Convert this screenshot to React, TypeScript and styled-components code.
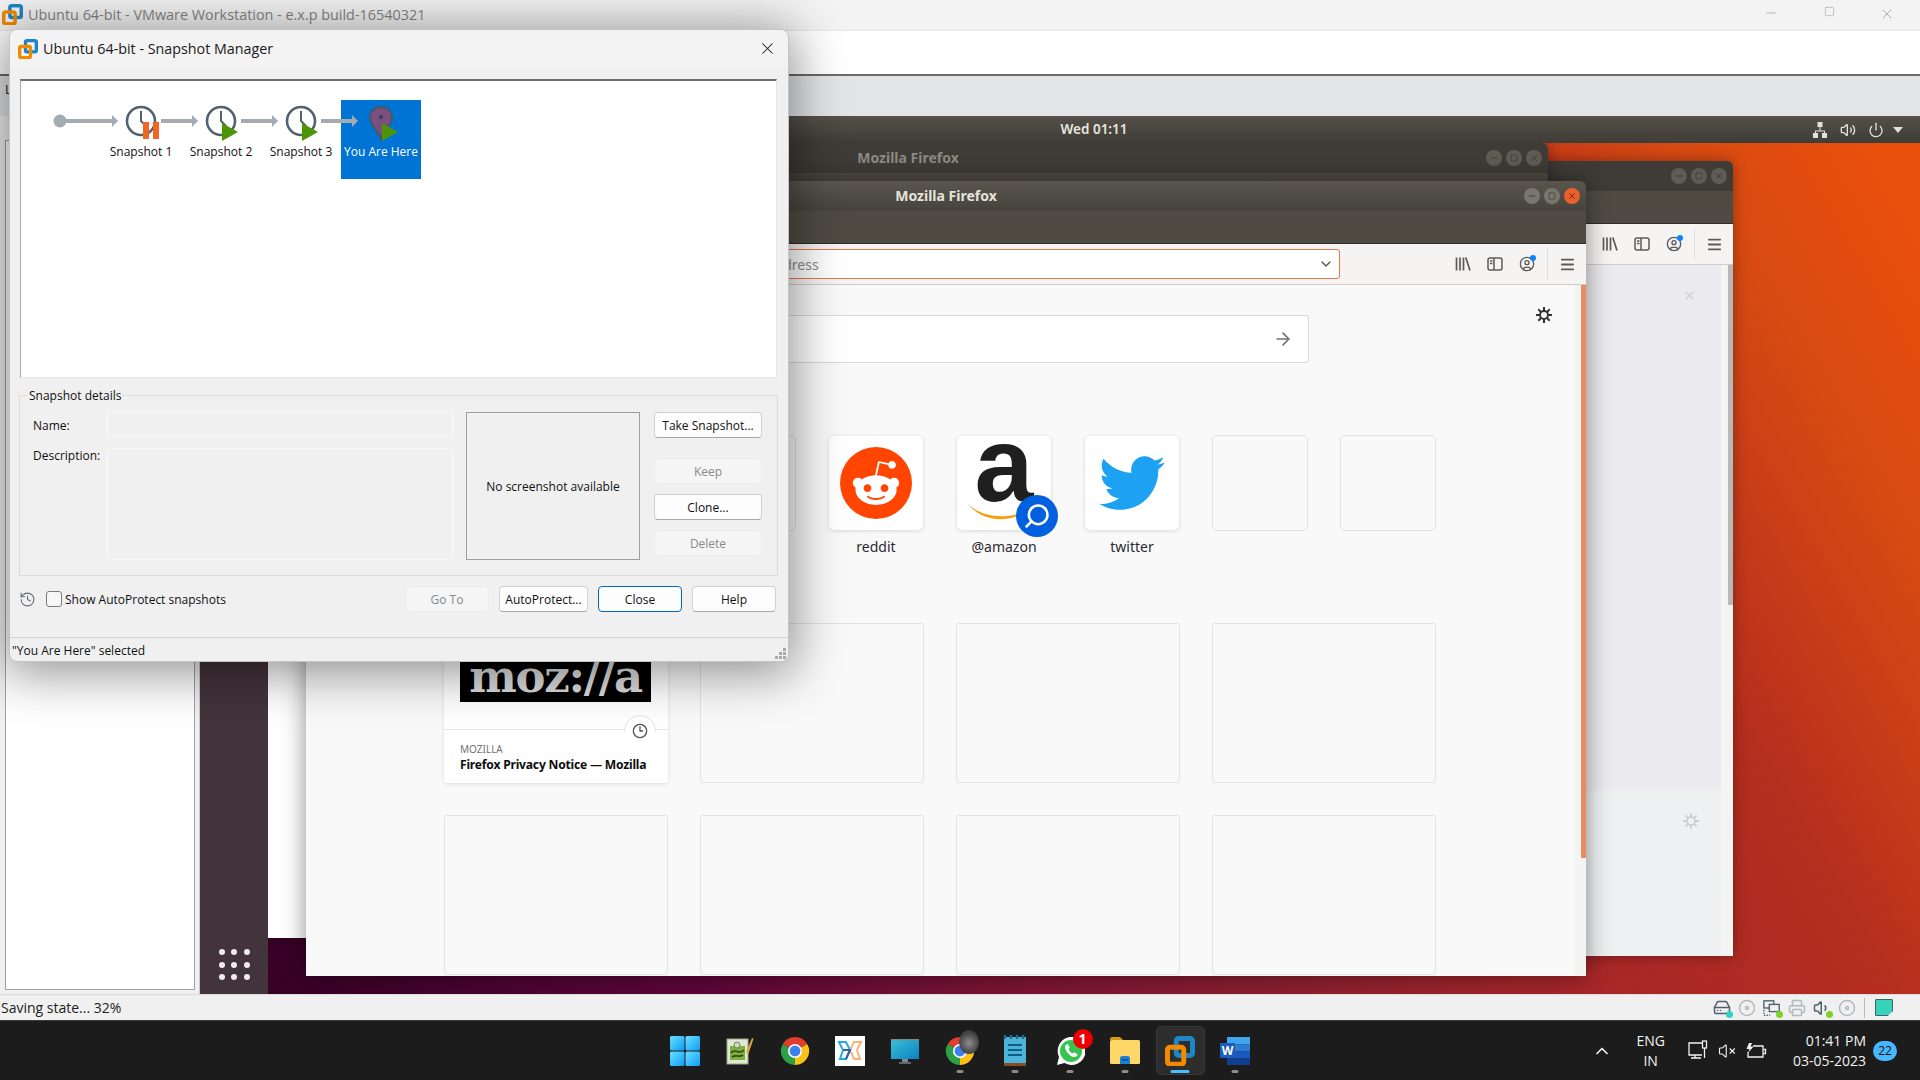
import React from "react";
import styled, { createGlobalStyle } from "styled-components";
import { ChevronDown, ChevronUp, CircleUser, Disc, HardDrive, Menu, Printer, Volume1, VolumeX, X, Power, Volume2, ArrowRight, Clock3, History, Minus, Square, Search } from "lucide-react";
import { FaRedditAlien, FaTwitter } from "react-icons/fa";

const GlobalStyle = createGlobalStyle`
	html, body {
		margin: 0;
		padding: 0;
		background: #f0f0f0;
	}
	* {
		box-sizing: border-box;
	}
`;

const uiFont = `"Open Sans", "Noto Sans", sans-serif`;
const ubuntuFont = `"Noto Sans", "Open Sans", sans-serif`;

const Screen = styled.div`
	position: relative;
	width: 1920px;
	height: 1080px;
	overflow: hidden;
	display: flex;
	flex-direction: column;
	font-family: ${uiFont};
	background: #f0f0f0;
`;

const AppTitleBar = styled.header`
	height: 30px;
	flex: none;
	display: flex;
	align-items: center;
	background: #f3f3f3;
	color: #858585;
	font-size: 14.4px;
	padding: 0 0 2px 2px;
	gap: 5px;
`;

const TitleControls = styled.div`
	margin-left: auto;
	display: flex;
	color: #888;
	& > span {
		width: 58px;
		display: flex;
		justify-content: center;
	}
	padding-right: 4px;
`;

const AppToolbar = styled.div`
	height: 44px;
	flex: none;
	background: #fff;
	border-top: 1px solid #e6e6e6;
`;

const TabStrip = styled.div`
	height: 42px;
	flex: none;
	background: #e3e4e6;
	border-top: 2px solid #6a6a6a;
	font-size: 13px;
	padding: 4px 0 0 5px;
	color: #222;
`;

const Body = styled.div`
	flex: 1;
	min-height: 0;
	display: flex;
`;

const LibraryColumn = styled.aside`
	width: 200px;
	flex: none;
	padding: 24px 4px 4px 5px;
	background: #f0f0f0;
	border-right: 1px solid #c8c8c8;
	display: flex;
`;

const LibraryTree = styled.div`
	flex: 1;
	background: #fff;
	border: 1px solid #a0a0a0;
`;

const Desktop = styled.main`
	flex: 1;
	min-width: 0;
	display: flex;
	flex-direction: column;
`;

const TopPanel = styled.div`
	height: 27px;
	flex: none;
	background: linear-gradient(#55514a, #3f3c36);
	color: #e9e6df;
	font: 600 13.5px ${ubuntuFont};
	display: flex;
	align-items: center;
	position: relative;
	justify-content: center;
	padding: 0 0 2px 68px;
`;

const PanelIcons = styled.div`
	position: absolute;
	right: 17px;
	top: 5px;
	display: flex;
	align-items: center;
	gap: 12px;
	color: #e4e1da;
`;

const Caret = styled.span`
	width: 0;
	height: 0;
	border-left: 5px solid transparent;
	border-right: 5px solid transparent;
	border-top: 6px solid #e4e1da;
	margin-left: -3px;
`;

const Wallpaper = styled.div`
	flex: 1;
	min-height: 0;
	position: relative;
	display: flex;
	background: linear-gradient(
		60deg,
		#2e0120 0%,
		#3a0228 5%,
		#5e0638 23%,
		#7a1434 36%,
		#8e2030 50%,
		#a5262a 61%,
		#b42d1f 76%,
		#d74a12 89%,
		#ea4f0c 98%
	);
	overflow: hidden;
`;

const Dock = styled.nav`
	width: 68px;
	flex: none;
	background: #43333a;
	display: grid;
	grid-template-columns: repeat(3, 6px);
	grid-auto-rows: 6px;
	justify-content: center;
	align-content: end;
	gap: 6.5px;
	padding-bottom: 14px;
	position: relative;
	z-index: 1;
	& > i {
		background: #efecec;
		border-radius: 50%;
	}
`;

const BrowserWindow = styled.section<{ $x: number; $y: number; $front?: boolean }>`
	position: absolute;
	left: ${(p) => p.$x}px;
	top: ${(p) => p.$y}px;
	width: 1280px;
	height: 795px;
	display: flex;
	flex-direction: column;
	border-radius: 6px 6px 0 0;
	overflow: hidden;
	box-shadow: ${(p) => (p.$front ? "0 0 24px rgba(0,0,0,.45)" : "0 0 14px rgba(0,0,0,.35)")};
`;

const WindowTitle = styled.div<{ $active?: boolean }>`
	height: 30px;
	flex: none;
	position: relative;
	display: flex;
	align-items: center;
	justify-content: center;
	padding-bottom: 2px;
	background: ${(p) => (p.$active ? "linear-gradient(#5a564e, #46433c)" : "#3f3c37")};
	color: ${(p) => (p.$active ? "#e6e2da" : "#8d8a83")};
	font: 700 14px ${ubuntuFont};
`;

const WindowButtons = styled.div`
	position: absolute;
	right: 6px;
	top: 7px;
	display: flex;
	gap: 4px;
`;

const WindowButton = styled.span<{ $close?: boolean; $dim?: boolean }>`
	width: 16px;
	height: 16px;
	border-radius: 50%;
	display: flex;
	align-items: center;
	justify-content: center;
	background: ${(p) => (p.$close ? "#e9602c" : p.$dim ? "#5f5c55" : "#7a766e")};
	color: ${(p) => (p.$close ? "#6e2a10" : "#3a3833")};
`;

const WindowHeader = styled.div`
	height: 33px;
	flex: none;
	background: #4f4b43;
	border-bottom: 1px solid #2f2d29;
`;

const NavBar = styled.div`
	height: 41px;
	flex: none;
	background: #f5f4f3;
	border-bottom: 1px solid #cfcdca;
	display: flex;
	align-items: center;
	color: #5b5b5b;
	padding-right: 10px;
`;

const UrlBar = styled.div`
	width: 1034px;
	height: 30px;
	flex: none;
	background: #fff;
	border: 1px solid #e9774b;
	border-radius: 3px;
	display: flex;
	align-items: center;
	justify-content: flex-end;
	padding: 0 5px;
	color: #555;
	font-size: 14px;
	font-family: ${ubuntuFont};
`;

const UrlHint = styled.span`
	margin-right: auto;
	margin-left: 350px;
	color: #8b8b8b;
`;

const NavTools = styled.div`
	margin-left: auto;
	display: flex;
	align-items: center;
	gap: 16px;
	& > svg {
		flex: none;
	}
`;

const NavDivider = styled.span`
	width: 1px;
	height: 32px;
	background: #dfdddb;
	margin: 0 -5px 0 -4px;
`;

const AccountBadge = styled.span`
	position: relative;
	display: flex;
	&::after {
		content: "";
		position: absolute;
		right: -1px;
		top: -1px;
		width: 6px;
		height: 6px;
		border-radius: 50%;
		background: #0a84ff;
	}
`;

const PageContent = styled.div<{ $tone: "blank" | "rear" | "newtab" }>`
	flex: 1;
	min-height: 0;
	position: relative;
	overflow: hidden;
	background: ${(p) =>
		p.$tone === "blank" ? "#fff" : p.$tone === "rear" ? "linear-gradient(#ebebef 526px, #eff0f1 526px)" : "#f9f9f9"};
`;

const ScrollTrack = styled.div`
	position: absolute;
	right: 0;
	top: 0;
	bottom: 0;
	width: 12px;
	background: #f4f4f2;
`;

const ScrollThumb = styled.span<{ $orange?: boolean }>`
	position: absolute;
	right: 0;
	top: 0;
	width: 5px;
	height: ${(p) => (p.$orange ? 573 : 340)}px;
	background: ${(p) => (p.$orange ? "#ee8a62" : "#b8b8b8")};
`;

const FadedMark = styled.span<{ $top: number }>`
	position: absolute;
	left: 1230px;
	top: ${(p) => p.$top}px;
	color: #cfcfd2;
	display: flex;
`;

const GearButton = styled.span`
	position: absolute;
	right: 34px;
	top: 22px;
	color: #333;
	display: flex;
`;

const NewTabColumn = styled.div`
	width: 992px;
	margin-left: 138px;
	padding-top: 30px;
	display: flex;
	flex-direction: column;
	align-items: flex-start;
	font-family: ${ubuntuFont};
`;

const SearchBox = styled.div`
	width: 738px;
	height: 48px;
	margin-left: 127px;
	background: #fff;
	border: 1px solid #d9d9dc;
	border-radius: 3px;
	display: flex;
	align-items: center;
	justify-content: flex-end;
	padding-right: 15px;
	color: #737373;
	flex: none;
`;

const TileRow = styled.div`
	display: flex;
	gap: 32px;
	margin-top: 72px;
`;

const Tile = styled.div`
	width: 96px;
	display: flex;
	flex-direction: column;
	align-items: center;
	gap: 6px;
	font-size: 14px;
	color: #2b2a33;
`;

const TileFace = styled.div<{ $empty?: boolean }>`
	width: ${(p) => (p.$empty ? 96 : 94)}px;
	height: ${(p) => (p.$empty ? 96 : 94)}px;
	margin: ${(p) => (p.$empty ? 0 : 1)}px;
	position: relative;
	border-radius: 5px;
	display: flex;
	align-items: center;
	justify-content: center;
	background: ${(p) => (p.$empty ? "#f9f9fa" : "#fff")};
	border: ${(p) => (p.$empty ? "1px solid #e3e3e5" : "none")};
	box-shadow: ${(p) => (p.$empty ? "none" : "0 1px 4px rgba(0,0,0,.14)")};
`;

const RedditDisc = styled.span`
	width: 72px;
	height: 72px;
	border-radius: 50%;
	background: #ff4500;
	color: #fff;
	display: flex;
	align-items: center;
	justify-content: center;
`;

const AmazonMark = styled.span`
	font: 700 106px/1 "Liberation Sans", sans-serif;
	color: #1f1f1f;
	margin-top: -38px;
`;

const AmazonSmile = styled.svg`
	position: absolute;
	left: 10px;
	top: 66px;
`;

const SearchBadge = styled.span`
	position: absolute;
	right: -7px;
	bottom: -7px;
	width: 42px;
	height: 42px;
	border-radius: 50%;
	background: #0060df;
	color: #fff;
	display: flex;
	align-items: center;
	justify-content: center;
	transform: scaleX(-1);
`;

const CardGrid = styled.div`
	display: grid;
	grid-template-columns: repeat(4, 224px);
	grid-auto-rows: 160px;
	gap: 32px;
	margin-top: 67px;
`;

const Card = styled.article<{ $empty?: boolean }>`
	border-radius: 3px;
	background: ${(p) => (p.$empty ? "#f9f9fa" : "#fff")};
	border: ${(p) => (p.$empty ? "1px solid #e3e3e5" : "none")};
	box-shadow: ${(p) => (p.$empty ? "none" : "0 1px 4px rgba(0,0,0,.12)")};
	position: relative;
	display: flex;
	flex-direction: column;
`;

const CardImage = styled.div`
	height: 107px;
	flex: none;
	padding: 0 17px 27px 16px;
	display: flex;
	border-bottom: 1px solid #e3e3e5;
`;

const MozLogo = styled.div`
	flex: 1;
	background: #000;
	color: #dcdcdc;
	font: 700 45px/1 "DejaVu Serif", serif;
	display: flex;
	align-items: flex-end;
	justify-content: center;
	padding-bottom: 3px;
	letter-spacing: -1.3px;
`;

const CardClock = styled.span`
	position: absolute;
	left: 180px;
	top: 92px;
	width: 32px;
	height: 32px;
	border-radius: 50%;
	background: #fff;
	border: 1px solid #e3e3e5;
	clip-path: inset(0 0 15px 0);
`;

const CardClockGlyph = styled.span`
	position: absolute;
	left: 188px;
	top: 100px;
	color: #55534f;
	display: flex;
`;

const CardMeta = styled.div`
	padding: 12px 16px 0;
	font-size: 10px;
	line-height: 14px;
	color: #737373;
`;

const CardTitle = styled.div`
	margin-top: 1px;
	font-size: 12.1px;
	line-height: 16px;
	font-weight: 700;
	color: #0c0c0d;
	white-space: nowrap;
	letter-spacing: -0.2px;
`;

const StatusBar = styled.footer`
	height: 26px;
	flex: none;
	background: #f0f0f0;
	border-top: 1px solid #dcdcdc;
	display: flex;
	align-items: center;
	font-size: 14px;
	padding-left: 1px;
	color: #222;
`;

const StatusIcons = styled.div`
	margin-left: auto;
	display: flex;
	align-items: center;
	gap: 7px;
	padding-right: 27px;
	color: #a9afb3;
`;

const DeviceIcon = styled.span<{ $active?: boolean }>`
	position: relative;
	width: 18px;
	display: flex;
	justify-content: center;
	color: ${(p) => (p.$active ? "#4f5f6b" : "#b4b9bd")};
`;

const DeviceDot = styled.i<{ $color: string }>`
	position: absolute;
	right: -2px;
	bottom: -1px;
	width: 7px;
	height: 7px;
	border-radius: 50%;
	background: ${(p) => p.$color};
`;

const StatusDivider = styled.span`
	width: 1px;
	height: 20px;
	background: #b8b8b8;
	margin: 0 3px 0 1px;
`;

const NoteIcon = styled.span`
	width: 18px;
	height: 17px;
	background: #35d4b8;
	border: 1px solid #47606a;
	border-radius: 1px;
	clip-path: polygon(0 0, 100% 0, 100% 70%, 70% 100%, 0 100%);
`;

const Taskbar = styled.footer`
	height: 60px;
	flex: none;
	background: #1c1c1c;
	border-top: 1px solid #3a3a3a;
	display: flex;
	align-items: center;
	color: #fff;
	font-size: 14px;
`;

const TaskSpacer = styled.div`
	flex: 1 1 0;
`;

const TaskApps = styled.div`
	display: flex;
	gap: 6px;
`;

const TaskApp = styled.div<{ $active?: boolean }>`
	width: 49px;
	height: 49px;
	position: relative;
	display: flex;
	align-items: center;
	justify-content: center;
	border-radius: 5px;
	background: ${(p) => (p.$active ? "#2d2d2d" : "transparent")};
	border: 1px solid ${(p) => (p.$active ? "#383838" : "transparent")};
`;

const RunningDot = styled.span<{ $active?: boolean }>`
	position: absolute;
	bottom: 1px;
	left: 50%;
	transform: translateX(-50%);
	height: 3px;
	width: ${(p) => (p.$active ? 19 : 7)}px;
	border-radius: 2px;
	background: ${(p) => (p.$active ? "#47c0ff" : "#8b8b8b")};
`;

const UnreadBadge = styled.span`
	position: absolute;
	right: 1px;
	top: 2px;
	width: 20px;
	height: 20px;
	border-radius: 50%;
	background: #ee0000;
	color: #fff;
	font: 700 14px/20px "Open Sans", sans-serif;
	text-align: center;
`;

const ProfileBlob = styled.span`
	position: absolute;
	right: 5px;
	top: 3px;
	width: 20px;
	height: 24px;
	border-radius: 50%;
	background: radial-gradient(circle at 50% 55%, #8f8f8f, #4a4a4a 55%, #2b2b2b);
`;

const Tray = styled.div`
	flex: 1 1 0;
	display: flex;
	align-items: center;
	justify-content: flex-end;
`;

const TwoLines = styled.div<{ $right?: boolean }>`
	display: flex;
	flex-direction: column;
	align-items: ${(p) => (p.$right ? "flex-end" : "center")};
	line-height: 20px;
	color: #f2f2f2;
`;

const LangBlock = styled(TwoLines)`
	margin-left: 24px;
`;

const TrayIcons = styled.div`
	display: flex;
	align-items: center;
	gap: 9px;
	margin: 0 26px 0 22px;
	color: #f2f2f2;
`;

const NotifyBadge = styled.span`
	width: 24px;
	height: 20px;
	border-radius: 10px;
	margin: 0 23px 0 7px;
	background: #47b8ff;
	color: #111;
	font-size: 12px;
	line-height: 20px;
	text-align: center;
`;

const Dialog = styled.section`
	position: absolute;
	z-index: 10;
	left: 9px;
	top: 29px;
	width: 780px;
	height: 633px;
	display: flex;
	flex-direction: column;
	background: #f0f0f0;
	border: 1px solid #c4c4c4;
	border-radius: 8px;
	box-shadow: 0 6px 50px 6px rgba(0, 0, 0, 0.42);
	font-size: 12px;
	color: #111;
	overflow: hidden;
`;

const DialogTitle = styled.div`
	height: 37px;
	flex: none;
	background: #f3f3f3;
	display: flex;
	align-items: center;
	gap: 5px;
	padding: 0 11px 0 8px;
	font-size: 14.3px;
	color: #1a1a1a;
	& > svg:last-child {
		margin-left: auto;
	}
`;

const SnapshotTree = styled.div`
	height: 299px;
	margin: 12px 11px 0 10px;
	flex: none;
	background: #fff;
	border-top: 2px solid #6e6e6e;
	border-left: 1px solid #a8a8a8;
	border-right: 1px solid #e6e6e6;
	border-bottom: 1px solid #e6e6e6;
	padding: 19px 0 0 80px;
	display: flex;
	align-items: flex-start;
`;

const SnapshotNode = styled.div<{ $selected?: boolean }>`
	width: 80px;
	height: 79px;
	display: flex;
	flex-direction: column;
	align-items: center;
	background: ${(p) => (p.$selected ? "#0074d4" : "transparent")};
	color: ${(p) => (p.$selected ? "#fff" : "#111")};
	white-space: nowrap;
	line-height: 16px;
	gap: 2px;
	& > svg {
		overflow: visible;
		flex: none;
	}
`;

const DetailsGroup = styled.fieldset`
	position: relative;
	margin: 17px 10px 0 9px;
	padding: 16px 14px 15px 13px;
	border: 1px solid #dcdcdc;
	height: 181px;
	flex: none;
	display: grid;
	grid-template-columns: 74px 346px 187px 122px;
	grid-template-rows: 25px 112px;
	row-gap: 11px;
	column-gap: 0;
`;

const GroupLegend = styled.span`
	position: absolute;
	left: 8px;
	top: -8px;
	padding: 0 1px;
	background: #f0f0f0;
	line-height: 16px;
`;

const FieldLabel = styled.label<{ $top: number }>`
	line-height: 16px;
	margin-top: ${(p) => p.$top}px;
`;

const FieldBox = styled.div`
	border: 1px solid #f8f8f8;
	background: #f0f0f0;
`;

const PreviewBox = styled.div`
	grid-column: 3;
	grid-row: 1 / 3;
	margin-left: 13px;
	border: 1px solid #9e9e9e;
	display: flex;
	align-items: center;
	justify-content: center;
`;

const ActionColumn = styled.div`
	grid-column: 4;
	grid-row: 1 / 3;
	margin-left: 14px;
	display: flex;
	flex-direction: column;
	align-items: stretch;
`;

const DialogButton = styled.button<{ $primary?: boolean; $gap?: number }>`
	height: 26px;
	flex: none;
	padding: 0;
	margin-top: ${(p) => p.$gap ?? 0}px;
	border-radius: 4px;
	font: 12px ${uiFont};
	color: #111;
	background: #fdfdfd;
	border: 1px solid ${(p) => (p.$primary ? "#0067c0" : "#d0d0d0")};
	border-bottom-color: ${(p) => (p.$primary ? "#0067c0" : "#a8a8a8")};
	&:disabled {
		background: #f5f5f5;
		border-color: #ececec;
		color: #8a8a8a;
	}
`;

const BottomRow = styled.div`
	height: 26px;
	margin: 10px 12px 0 9px;
	flex: none;
	display: flex;
	align-items: center;
	color: #111;
`;

const Checkbox = styled.span`
	width: 16px;
	height: 16px;
	margin: 0 3px 0 10px;
	background: #f7f7f7;
	border: 1px solid #7a7a7a;
	border-radius: 3px;
`;

const BottomButtons = styled.div`
	margin-left: auto;
	display: grid;
	grid-template-columns: 84px 89px 84px 84px;
	gap: 10px;
`;

const DialogStatus = styled.div`
	margin-top: auto;
	height: 24px;
	flex: none;
	position: relative;
	border-top: 1px solid #d4d4d4;
	padding-left: 2px;
	line-height: 26px;
`;

const ResizeGrip = styled.svg`
	position: absolute;
	right: 1px;
	bottom: 1px;
`;

// logos and glyphs that no icon package has

const VmwareLogo = ({ size }: { size: number }) => (
	<svg width={size} height={size} viewBox="0 0 24 24" fill="none">
		<rect x="9" y="2" width="13" height="13.500" rx="2" stroke="#1b87c9" strokeWidth="4" />
		<rect x="2" y="9" width="13" height="13.500" rx="2" stroke="#f18a00" strokeWidth="4" />
	</svg>
);

const ClockFace = () => (
	<g fill="none" stroke="#506270" strokeWidth="2.6">
		<circle cx="40" cy="21" r="14" />
		<path d="M40 11v10l5 5" strokeWidth="2" />
	</g>
);

const NodeArrow = ({ from }: { from: number }) => (
	<g>
		{from < -30 && <circle cx={from} cy="21" r="6.5" fill="#a4abb1" />}
		<path d={`M${from} 21H13`} stroke="#a4abb1" strokeWidth="4" />
		<path d="M11 15l6 6-6 6z" fill="#a4abb1" />
	</g>
);

const PlayMark = () => <path d="M41 23l16 9-16 9z" fill="#4c9408" />;

const NodeGlyph = ({ index }: { index: number }) => {
	if (index === 3) {
		return (
			<svg width="80" height="42" viewBox="0 0 80 42">
				<NodeArrow from={-20} />
				<path d="M40 7c-6.500 0-11 4.600-11 10.500 0 7 8 14 11 21 3-7 11-14 11-21C51 11.600 46.500 7 40 7z" fill="#7b4f7f" stroke="#465868" strokeWidth="2" />
				<circle cx="40" cy="17" r="2" fill="#35404a" />
				<PlayMark />
			</svg>
		);
	}
	return (
		<svg width="80" height="42" viewBox="0 0 80 42">
			<NodeArrow from={index === 0 ? -41 : -20} />
			<ClockFace />
			{index === 0 ? (
				<g fill="#f26522">
					<rect x="42" y="22" width="6" height="17" />
					<rect x="52" y="22" width="6" height="17" />
				</g>
			) : (
				<PlayMark />
			)}
		</svg>
	);
};

const LibraryIcon = () => (
	<svg width="16" height="16" viewBox="0 0 16 16" stroke="currentColor" strokeWidth="1.700">
		<path d="M1.500 1.500v13M5 1.500v13M8.500 1.500v13M10.800 1.500L15 14.500" />
	</svg>
);

const SidebarIcon = () => (
	<svg width="16" height="16" viewBox="0 0 16 16" fill="none" stroke="currentColor" strokeWidth="1.500">
		<rect x="1" y="2" width="14" height="12" rx="2" />
		<path d="M7 2v12M3 5h2.500M3 7.500h2.500" />
	</svg>
);

const SunGear = ({ size, strokeWidth }: { size: number; strokeWidth: number }) => (
	<svg width={size} height={size} viewBox="0 0 16 16" fill="none" stroke="currentColor" strokeWidth={strokeWidth}>
		<circle cx="8" cy="8" r="4" />
		<path d="M8 0v4M8 12v4M0 8h4M12 8h4M2.300 2.300l2.800 2.800M10.900 10.900l2.800 2.800M2.300 13.700l2.800-2.800M10.900 5.100l2.800-2.800" />
	</svg>
);

const PanelNetworkIcon = () => (
	<svg width="16" height="18" viewBox="0 0 16 18" fill="currentColor">
		<rect x="5.500" y="1" width="5" height="5" />
		<rect x="1" y="12" width="5" height="5" />
		<rect x="10" y="12" width="5" height="5" />
		<path d="M7.500 6h1v3.500H13V12h-1V10.500H4V12H3V9.500h4.500z" />
	</svg>
);

const SharedFoldersIcon = () => (
	<svg width="20" height="18" viewBox="0 0 20 18" fill="none" stroke="currentColor" strokeWidth="1.500">
		<rect x="1" y="1" width="11" height="8" fill="#f0f0f0" />
		<rect x="7" y="5" width="11" height="8" fill="#f0f0f0" />
		<path d="M1 11v6h7" strokeDasharray="1.500 1.500" />
	</svg>
);

const ChromeIcon = () => (
	<svg width="30" height="30" viewBox="0 0 32 32">
		<path d="M16 16L3 8.500A15 15 0 0 1 29 8.500z" fill="#e33b2e" />
		<path d="M16 16L29 8.500A15 15 0 0 1 16 31z" fill="#fbc116" />
		<path d="M16 16L16 31A15 15 0 0 1 3 8.500z" fill="#2d9f47" />
		<circle cx="16" cy="16" r="7.500" fill="#fff" />
		<circle cx="16" cy="16" r="5.800" fill="#3c7fee" />
	</svg>
);

const WindowsIcon = () => (
	<svg width="30" height="30" viewBox="0 0 30 30">
		<defs>
			<linearGradient id="win" x1="0" y1="0" x2="1" y2="1">
				<stop offset="0" stopColor="#6be1ff" />
				<stop offset="1" stopColor="#0f9cf5" />
			</linearGradient>
		</defs>
		<rect x="0" y="0" width="14.500" height="14.500" rx="1.500" fill="url(#win)" />
		<rect x="15.500" y="0" width="14.500" height="14.500" rx="1.500" fill="url(#win)" />
		<rect x="0" y="15.500" width="14.500" height="14.500" rx="1.500" fill="url(#win)" />
		<rect x="15.500" y="15.500" width="14.500" height="14.500" rx="1.500" fill="url(#win)" />
	</svg>
);

const NotepadPlusIcon = () => (
	<svg width="30" height="30" viewBox="0 0 30 30">
		<rect x="2" y="3" width="21" height="25" fill="#dfe8d2" stroke="#9aa58c" />
		<rect x="5" y="10" width="15" height="14" fill="#7fb13a" />
		<path d="M6 17c4-6 8 3 13-3M7 21c4-3 7 1 11-2" stroke="#2d4a14" strokeWidth="1.600" fill="none" />
		<circle cx="12" cy="9" r="3" fill="#cfd8c2" stroke="#76806a" />
		<path d="M21 16l6-14 1.500.8-5 15z" fill="#d9a23a" />
	</svg>
);

const ZohoIcon = () => (
	<svg width="30" height="30" viewBox="0 0 30 30" fill="none" strokeWidth="2">
		<rect width="30" height="30" fill="#fff" />
		<path d="M4 6h7l4 8-4 9H5l3-9z" stroke="#27a9e1" />
		<path d="M26 6h-7l-4 8 4 9h6l-3-9z" stroke="#f9b27a" />
		<path d="M8 14h7l-4 9" stroke="#2d5fb3" />
	</svg>
);

const MonitorIcon = () => (
	<svg width="30" height="30" viewBox="0 0 30 30">
		<defs>
			<linearGradient id="mon" x1="0" y1="0" x2="1" y2="1">
				<stop offset="0" stopColor="#37c4d8" />
				<stop offset="1" stopColor="#0f7ec2" />
			</linearGradient>
		</defs>
		<rect x="1" y="3" width="28" height="20" fill="url(#mon)" />
		<rect x="1" y="3" width="28" height="1.500" fill="#7a8a92" />
		<rect x="12" y="23" width="6" height="3" fill="#7c8890" />
		<rect x="9" y="26" width="12" height="2" fill="#5d666c" />
	</svg>
);

const NotepadIcon = () => (
	<svg width="24" height="32" viewBox="0 0 24 32">
		<rect x="1" y="2" width="22" height="27" fill="#4cb3d9" />
		<rect x="1" y="28" width="22" height="3" fill="#8a4b1f" />
		<path d="M2 0v4M8 0v4M14 0v4M20 0v4" stroke="#1c6f96" strokeWidth="2.400" />
		<path d="M5 10h14M5 15h14M5 20h14" stroke="#125d87" strokeWidth="2" />
	</svg>
);

const WhatsappIcon = () => (
	<svg width="30" height="30" viewBox="0 0 30 30">
		<path d="M2 29l2-8A14 14 0 1 1 9.500 27z" fill="#fff" />
		<circle cx="16" cy="15" r="11" fill="#35c54f" />
		<path d="M11.500 8.500c-2 1.500-2 4 .5 7.500s5.500 5.500 8 5c1.500-.4 2.500-1.500 2.500-2.800l-3.500-2-1.500 1.300c-1.500-.5-3.500-2.800-4-4.500l1.300-1.400-2-3.600z" fill="#fff" />
	</svg>
);

const FolderIcon = () => (
	<svg width="30" height="30" viewBox="0 0 30 30">
		<path d="M0 3c0-1 1-2 2-2h8l3 3H0z" fill="#d59b12" />
		<rect x="0" y="4" width="30" height="24" rx="1.500" fill="#ffd769" />
		<path d="M10 28v-6c0-1 1-2 2-2h6c1 0 2 1 2 2v6z" fill="#1d7fd1" />
		<rect x="12" y="23" width="6" height="1.500" fill="#0c4f8c" />
	</svg>
);

const WordIcon = () => (
	<svg width="30" height="30" viewBox="0 0 30 30">
		<rect x="7" y="1" width="23" height="7.500" fill="#41a5ee" />
		<rect x="7" y="8.500" width="23" height="7" fill="#2b7cd3" />
		<rect x="7" y="15.500" width="23" height="7" fill="#185abd" />
		<rect x="7" y="22.500" width="23" height="6.500" fill="#103f91" />
		<rect x="0" y="7" width="15" height="15" rx="1" fill="#1a5cbf" />
		<text x="7.500" y="18.500" fontSize="12" fontWeight="700" fill="#fff" textAnchor="middle" fontFamily="Open Sans">W</text>
	</svg>
);

const MonitorPlugIcon = () => (
	<svg width="22" height="22" viewBox="0 0 22 22" fill="none" stroke="currentColor" strokeWidth="1.300">
		<path d="M15 3H2v12h13M8 15v3M4 18h10" />
		<rect x="15.500" y="1" width="4" height="7" />
		<path d="M17.500 8v10" />
	</svg>
);

const BatteryBoltIcon = () => (
	<svg width="22" height="20" viewBox="0 0 22 20" fill="none" stroke="currentColor" strokeWidth="1.300">
		<path d="M8 5h10v11H3V11" />
		<path d="M18.500 8.500h2v4h-2" />
		<path d="M4 2L1.500 8h3L3 12l5.500-6.500h-3L7 2z" fill="currentColor" stroke="none" />
	</svg>
);

const browserTools = (
	<NavTools>
		<LibraryIcon />
		<SidebarIcon />
		<AccountBadge>
			<CircleUser size={16} />
		</AccountBadge>
		<NavDivider />
		<Menu size={17} strokeWidth={2.500} />
	</NavTools>
);

const WindowControls = ({ active }: { active?: boolean }) => (
	<WindowButtons>
		<WindowButton $dim={!active}>
			<Minus size={10} strokeWidth={2} />
		</WindowButton>
		<WindowButton $dim={!active}>
			<Square size={8} strokeWidth={2} />
		</WindowButton>
		<WindowButton $close={active} $dim={!active}>
			<X size={10} strokeWidth={2} />
		</WindowButton>
	</WindowButtons>
);

const snapshots = ["Snapshot 1", "Snapshot 2", "Snapshot 3", "You Are Here"];
const taskApps: { key: string; icon: React.ReactNode; running?: boolean; active?: boolean; unread?: boolean; blob?: boolean }[] = [
	{ key: "start", icon: <WindowsIcon /> },
	{ key: "notepadpp", icon: <NotepadPlusIcon /> },
	{ key: "chrome", icon: <ChromeIcon /> },
	{ key: "zoho", icon: <ZohoIcon /> },
	{ key: "desktop", icon: <MonitorIcon /> },
	{ key: "chrome2", icon: <ChromeIcon />, running: true, blob: true },
	{ key: "notepad", icon: <NotepadIcon />, running: true },
	{ key: "whatsapp", icon: <WhatsappIcon />, running: true, unread: true },
	{ key: "explorer", icon: <FolderIcon />, running: true },
	{ key: "vmware", icon: <VmwareLogo size={30} />, active: true },
	{ key: "word", icon: <WordIcon />, running: true },
];

export default function App() {
	return (
		<Screen>
			<GlobalStyle />
			<AppTitleBar>
				<VmwareLogo size={21} />
				Ubuntu 64-bit - VMware Workstation - e.x.p build-16540321
				<TitleControls>
					<span><Minus size={14} strokeWidth={1} /></span>
					<span><Square size={11} strokeWidth={1} /></span>
					<span><X size={16} strokeWidth={1} /></span>
				</TitleControls>
			</AppTitleBar>
			<AppToolbar />
			<TabStrip>Library</TabStrip>
			<Body>
				<LibraryColumn>
					<LibraryTree />
				</LibraryColumn>
				<Desktop>
					<TopPanel>
						Wed 01:11
						<PanelIcons>
							<PanelNetworkIcon />
							<Volume2 size={16} />
							<Power size={16} />
							<Caret />
						</PanelIcons>
					</TopPanel>
					<Wallpaper>
						<Dock>
							{Array.from({ length: 9 }, (_, i) => <i key={i} />)}
						</Dock>
						<BrowserWindow $x={253} $y={18}>
							<WindowTitle>
								Mozilla Firefox
								<WindowControls />
							</WindowTitle>
							<WindowHeader />
							<NavBar>{browserTools}</NavBar>
							<PageContent $tone="rear">
								<FadedMark $top={24}><X size={13} /></FadedMark>
								<FadedMark $top={548}><SunGear size={16} strokeWidth={1.800} /></FadedMark>
								<ScrollTrack><ScrollThumb /></ScrollTrack>
							</PageContent>
						</BrowserWindow>
						<BrowserWindow $x={68} $y={0}>
							<WindowTitle>
								Mozilla Firefox
								<WindowControls />
							</WindowTitle>
							<WindowHeader />
							<NavBar />
							<PageContent $tone="blank" />
						</BrowserWindow>
						<BrowserWindow $x={106} $y={38} $front>
							<WindowTitle $active>
								Mozilla Firefox
								<WindowControls active />
							</WindowTitle>
							<WindowHeader />
							<NavBar>
								<UrlBar>
									<UrlHint>Search or enter address</UrlHint>
									<ChevronDown size={16} />
								</UrlBar>
								{browserTools}
							</NavBar>
							<PageContent $tone="newtab">
								<GearButton><SunGear size={16} strokeWidth={2} /></GearButton>
								<ScrollTrack><ScrollThumb $orange /></ScrollTrack>
								<NewTabColumn>
									<SearchBox><ArrowRight size={20} /></SearchBox>
									<TileRow>
										<Tile><TileFace $empty /></Tile>
										<Tile><TileFace $empty /></Tile>
										<Tile><TileFace $empty /></Tile>
										<Tile>
											<TileFace>
												<RedditDisc><FaRedditAlien size={50} /></RedditDisc>
											</TileFace>
											reddit
										</Tile>
										<Tile>
											<TileFace>
												<AmazonMark>a</AmazonMark>
												<AmazonSmile width="62" height="20" viewBox="0 0 62 20">
													<path d="M1 2c14 14 40 16 60 6-18 14-46 12-60-6z" fill="#f79c0c" />
												</AmazonSmile>
												<SearchBadge><Search size={28} strokeWidth={2.200} /></SearchBadge>
											</TileFace>
											@amazon
										</Tile>
										<Tile>
											<TileFace><FaTwitter size={66} color="#1da1f2" /></TileFace>
											twitter
										</Tile>
										<Tile><TileFace $empty /></Tile>
										<Tile><TileFace $empty /></Tile>
									</TileRow>
									<CardGrid>
										<Card>
											<CardImage>
												<MozLogo>moz://a</MozLogo>
											</CardImage>
											<CardClock />
											<CardClockGlyph><Clock3 size={16} /></CardClockGlyph>
											<CardMeta>
												MOZILLA
												<CardTitle>Firefox Privacy Notice — Mozilla</CardTitle>
											</CardMeta>
										</Card>
										{Array.from({ length: 7 }, (_, i) => <Card key={i} $empty />)}
									</CardGrid>
								</NewTabColumn>
							</PageContent>
						</BrowserWindow>
					</Wallpaper>
				</Desktop>
			</Body>
			<StatusBar>
				Saving state... 32%
				<StatusIcons>
					<DeviceIcon $active><HardDrive size={19} /><DeviceDot $color="#2fd0c8" /></DeviceIcon>
					<DeviceIcon><Disc size={18} /></DeviceIcon>
					<DeviceIcon $active><SharedFoldersIcon /><DeviceDot $color="#7ed321" /></DeviceIcon>
					<DeviceIcon><Printer size={18} /></DeviceIcon>
					<DeviceIcon $active><Volume1 size={18} /><DeviceDot $color="#7ed321" /></DeviceIcon>
					<DeviceIcon><Disc size={18} /></DeviceIcon>
					<StatusDivider />
					<NoteIcon />
				</StatusIcons>
			</StatusBar>
			<Taskbar>
				<TaskSpacer />
				<TaskApps>
					{taskApps.map((app) => (
						<TaskApp key={app.key} $active={app.active}>
							{app.icon}
							{app.blob && <ProfileBlob />}
							{app.unread && <UnreadBadge>1</UnreadBadge>}
							{(app.running || app.active) && <RunningDot $active={app.active} />}
						</TaskApp>
					))}
				</TaskApps>
				<Tray>
					<ChevronUp size={20} color="#f2f2f2" />
					<LangBlock>
						<span>ENG</span>
						<span>IN</span>
					</LangBlock>
					<TrayIcons>
						<MonitorPlugIcon />
						<VolumeX size={18} strokeWidth={1.500} />
						<BatteryBoltIcon />
					</TrayIcons>
					<TwoLines $right>
						<span>01:41 PM</span>
						<span>03-05-2023</span>
					</TwoLines>
					<NotifyBadge>22</NotifyBadge>
				</Tray>
			</Taskbar>
			<Dialog>
				<DialogTitle>
					<VmwareLogo size={20} />
					Ubuntu 64-bit - Snapshot Manager
					<X size={19} strokeWidth={1.300} />
				</DialogTitle>
				<SnapshotTree>
					{snapshots.map((name, i) => (
						<SnapshotNode key={name} $selected={i === 3}>
							<NodeGlyph index={i} />
							{name}
						</SnapshotNode>
					))}
				</SnapshotTree>
				<DetailsGroup>
					<GroupLegend>Snapshot details</GroupLegend>
					<FieldLabel $top={6}>Name:</FieldLabel>
					<FieldBox />
					<FieldLabel $top={0}>Description:</FieldLabel>
					<FieldBox />
					<PreviewBox>No screenshot available</PreviewBox>
					<ActionColumn>
						<DialogButton>Take Snapshot...</DialogButton>
						<DialogButton disabled $gap={20}>Keep</DialogButton>
						<DialogButton $gap={10}>Clone...</DialogButton>
						<DialogButton disabled $gap={10}>Delete</DialogButton>
					</ActionColumn>
				</DetailsGroup>
				<BottomRow>
					<History size={17} color="#5f6c76" strokeWidth={1.500} />
					<Checkbox />
					Show AutoProtect snapshots
					<BottomButtons>
						<DialogButton disabled>Go To</DialogButton>
						<DialogButton>AutoProtect...</DialogButton>
						<DialogButton $primary>Close</DialogButton>
						<DialogButton>Help</DialogButton>
					</BottomButtons>
				</BottomRow>
				<DialogStatus>
					"You Are Here" selected
					<ResizeGrip width="12" height="12" viewBox="0 0 12 12" fill="#a9a9a9">
						<rect x="8" y="0" width="3" height="3" />
						<rect x="4" y="4" width="3" height="3" />
						<rect x="8" y="4" width="3" height="3" />
						<rect x="0" y="8" width="3" height="3" />
						<rect x="4" y="8" width="3" height="3" />
						<rect x="8" y="8" width="3" height="3" />
					</ResizeGrip>
				</DialogStatus>
			</Dialog>
		</Screen>
	);
}
